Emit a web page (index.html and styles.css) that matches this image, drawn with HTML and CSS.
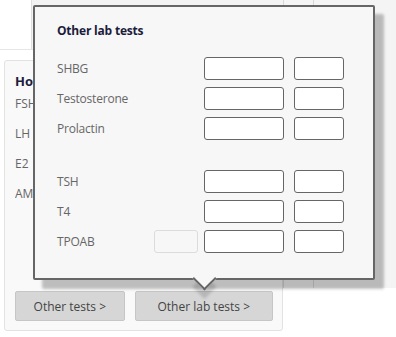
FILE: index.html
```html
<!DOCTYPE html>
<html lang="en">
<head>
    <meta charset="UTF-8">
    <meta name="viewport" content="width=device-width, initial-scale=1.0">
    <title>Other lab tests</title>
    <link rel="stylesheet" href="styles.css">
</head>
<body>

    <div class="page">
        <div class="main">
            <div class="top">
                <div class="top-strip"></div>
            </div>

            <div class="panel">
                <div class="panel-title">Hormones</div>
                <div class="panel-row">FSH</div>
                <div class="panel-row">LH</div>
                <div class="panel-row">E2</div>
                <div class="panel-row">AMH</div>

                <div class="panel-buttons">
                    <button class="btn btn-other">Other tests &gt;</button>
                    <button class="btn btn-lab">Other lab tests &gt;</button>
                </div>
            </div>
        </div>

        <div class="side">
            <div class="side-col"></div>
            <div class="side-col side-col-wide"></div>
        </div>

        <!-- Popup over the lab tests button -->
        <div class="popup">
            <div class="popup-title">Other lab tests</div>

            <div class="lab-grid">
                <span class="lab-label">SHBG</span>
                <span></span>
                <input class="field field-value" type="text">
                <input class="field field-unit" type="text">

                <span class="lab-label">Testosterone</span>
                <span></span>
                <input class="field field-value" type="text">
                <input class="field field-unit" type="text">

                <span class="lab-label">Prolactin</span>
                <span></span>
                <input class="field field-value" type="text">
                <input class="field field-unit" type="text">

                <div class="lab-spacer"></div>

                <span class="lab-label">TSH</span>
                <span></span>
                <input class="field field-value" type="text">
                <input class="field field-unit" type="text">

                <span class="lab-label">T4</span>
                <span></span>
                <input class="field field-value" type="text">
                <input class="field field-unit" type="text">

                <span class="lab-label">TPOAB</span>
                <input class="field field-faded" type="text" disabled>
                <input class="field field-value" type="text">
                <input class="field field-unit" type="text">
            </div>

            <div class="popup-arrow"></div>
        </div>
    </div>

</body>
</html>
```

FILE: styles.css
```css
body {
    margin: 0;
    padding: 0;
    background: #fff;
    font-family: 'Open Sans', 'Noto Sans', sans-serif;
    font-size: 12px;
    color: #666;
}

.page {
    position: relative;
    display: flex;
    width: 396px;
    height: 337px;
    overflow: hidden;
}

.main {
    width: 283px;
    display: flex;
    flex-direction: column;
}

/* Háttér táblázat teteje */
.top {
    height: 50px;
    display: flex;
    border-bottom: 1px solid #e6e6e6;
    box-sizing: border-box;
}

.top-strip {
    margin-left: 31px;
    flex: 1;
    background: #f3f3f3;
    border-left: 1px solid #dedede;
}

.side {
    flex: 1;
    height: 288px;
    display: flex;
    background: #f4f4f4;
    border-left: 1px solid #d8d8d8;
}

.side-col {
    width: 29px;
    border-right: 1px solid #d8d8d8;
}

.side-col-wide {
    flex: 1;
    border-right: none;
}

/* Bal oldali panel */
.panel {
    margin: 10px 0 0 4px;
    height: 271px;
    box-sizing: border-box;
    border: 1px solid #e2e2e2;
    border-radius: 3px;
    background: #f9f9f9;
    padding: 12px 9px 9px 10px;
    display: flex;
    flex-direction: column;
}

/* A felugró ablak alá eső részt levágjuk */
.panel-title,
.panel-row {
    width: 19px;
    overflow: hidden;
    white-space: nowrap;
}

.panel-title {
    font-size: 13px;
    font-weight: 700;
    line-height: 16px;
    color: #1c1c3c;
}

.panel-row {
    height: 30px;
    line-height: 30px;
    font-size: 12px;
    color: #666;
}

.panel-buttons {
    margin-top: auto;
    display: flex;
    gap: 10px;
}

.btn {
    height: 30px;
    box-sizing: border-box;
    border: 1px solid #c6c6c6;
    border-radius: 2px;
    background: #d6d6d6;
    font-family: 'Open Sans', 'Noto Sans', sans-serif;
    font-size: 12px;
    color: #444;
    padding: 0;
}

.btn-other {
    width: 110px;
}

.btn-lab {
    width: 139px;
}

/* Felugró ablak */
.popup {
    position: absolute;
    left: 33px;
    top: 5px;
    width: 342px;
    height: 275px;
    box-sizing: border-box;
    background: #f7f7f7;
    border: 2px solid #666;
    border-radius: 2px;
    box-shadow: 9px 9px 3px rgba(0, 0, 0, 0.24);
    padding: 15px 0 0 22px;
}

.popup-title {
    font-size: 12px;
    font-weight: 700;
    line-height: 18px;
    letter-spacing: -0.2px;
    color: #1c1c3c;
    margin-bottom: 17px;
}

.lab-grid {
    display: grid;
    grid-template-columns: 97px 50px 90px 50px;
    grid-template-rows: repeat(3, 23px) 16px repeat(3, 23px);
    row-gap: 7px;
    align-items: center;
}

.lab-label {
    color: #666;
    font-size: 12px;
    letter-spacing: -0.2px;
}

.lab-spacer {
    grid-column: 1 / -1;
    height: 16px;
}

.field {
    height: 23px;
    box-sizing: border-box;
    border: 1px solid #666;
    border-radius: 3px;
    background: #fff;
    padding: 0;
    margin: 0;
}

.field-value {
    width: 80px;
}

.field-unit {
    width: 50px;
}

.field-faded {
    width: 44px;
    border-color: #dcdcdc;
    background: #f7f7f7;
}

.popup-arrow {
    position: absolute;
    left: 161px;
    bottom: -9px;
    width: 15px;
    height: 15px;
    background: #f7f7f7;
    border-right: 2px solid #666;
    border-bottom: 2px solid #666;
    transform: rotate(45deg);
    box-shadow: 6px 6px 3px rgba(0, 0, 0, 0.15);
}
```
